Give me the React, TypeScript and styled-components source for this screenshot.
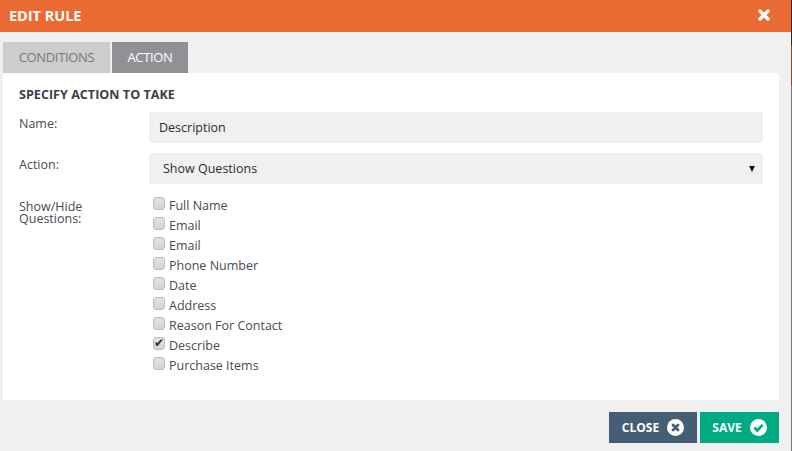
import React from "react";
import styled, { createGlobalStyle } from "styled-components";

const Global = createGlobalStyle`
  html, body { margin: 0; padding: 0; height: 100%; }
  body {
    font-family: "Open Sans", "Liberation Sans", sans-serif;
    overflow: hidden;
    background: linear-gradient(#2a2a2a 0 45px, #8c4a2c 45px 86px, #7c7c7c 86px);
  }
  * { box-sizing: border-box; }
`;

const Modal = styled.div`
  width: 791px;
  height: 451px;
  background: #f0f0f0;
  display: flex;
  flex-direction: column;
`;

const Header = styled.header`
  height: 32px;
  background: #e96b33;
  display: flex;
  align-items: center;
  justify-content: space-between;
  padding: 0 21px 2px 9px;
  color: #fff;
`;

const Title = styled.h1`
  margin: 0;
  font-size: 14.5px;
  font-weight: 700;
  letter-spacing: -0.03px;
`;

const Tabs = styled.div`
  display: flex;
  gap: 2px;
  margin: 10px 0 0 3px;
  height: 31px;
`;

const Tab = styled.div<{ $active?: boolean }>`
  height: 31px;
  width: ${(p) => (p.$active ? "76px" : "107px")};
  background: ${(p) => (p.$active ? "#919195" : "#cdcdcd")};
  color: ${(p) => (p.$active ? "#fff" : "#75777c")};
  font-size: 13px;
  letter-spacing: -0.35px;
  display: flex;
  align-items: center;
  justify-content: center;
  padding-bottom: 1px;
`;

const Panel = styled.section`
  width: 776px;
  height: 327px;
  margin-left: 3px;
  background: #fff;
  padding: 13px 16px 0 16px;
`;

const SectionTitle = styled.h2`
  margin: 0 0 9px;
  font-size: 12.6px;
  line-height: 17px;
  font-weight: 700;
  color: #3e3e46;
`;

const Row = styled.div<{ $gap: number }>`
  display: flex;
  margin-bottom: ${(p) => p.$gap}px;
`;

const Label = styled.div<{ $top: number }>`
  width: 130px;
  flex: none;
  font-size: 12.5px;
  line-height: 12px;
  color: #4a4a50;
  padding-top: ${(p) => p.$top}px;
`;

const Field = styled.div<{ $indent: number }>`
  width: 614px;
  height: 31px;
  background: #f0f0f0;
  color: #2c2c30;
  font-size: 12.5px;
  display: flex;
  align-items: center;
  justify-content: space-between;
  padding: 0 8px 0 ${(p) => p.$indent}px;
`;

const Caret = styled.span`
  width: 0;
  height: 0;
  border-left: 3.5px solid transparent;
  border-right: 3.5px solid transparent;
  border-top: 6px solid #111;
`;

const CheckList = styled.div`
  display: flex;
  flex-direction: column;
  margin-top: -2px;
  margin-left: 4px;
`;

const CheckRow = styled.label`
  height: 20px;
  display: flex;
  align-items: center;
  gap: 4px;
  font-size: 12.5px;
  color: #4a4a50;
`;

const Box = styled.input`
  appearance: none;
  width: 12px;
  height: 13px;
  margin: 0 0 3px;
  border: 1px solid #bcbcbc;
  border-radius: 3px;
  background: linear-gradient(#e2e2e2, #d6d6d6);
  display: grid;
  place-items: center;
  &:checked::after {
    content: "✔";
    font-size: 12px;
    line-height: 11px;
    color: #2e2e2e;
  }
`;

const Footer = styled.footer`
  display: flex;
  justify-content: flex-end;
  gap: 3px;
  padding: 12px 12px 0 0;
`;

const Action = styled.button<{ $bg: string; $w: number }>`
  width: ${(p) => p.$w}px;
  height: 31px;
  border: 0;
  background: ${(p) => p.$bg};
  color: #fff;
  font-family: inherit;
  font-size: 12px;
  font-weight: 700;
  display: flex;
  align-items: center;
  justify-content: center;
  gap: 8px;
  padding: 0;
`;

const items = ["Full Name", "Email", "Email", "Phone Number", "Date", "Address", "Reason For Contact", "Describe", "Purchase Items"];

export default function App() {
  return (
    <Modal>
      <Global />
      <Header>
        <Title>EDIT RULE</Title>
        <svg width="12" height="12" viewBox="0 0 12 12" aria-label="close">
          <path d="M2 2l8 8M10 2l-8 8" stroke="#fff" strokeWidth="3.4" strokeLinecap="round" />
        </svg>
      </Header>
      <Tabs>
        <Tab>CONDITIONS</Tab>
        <Tab $active>ACTION</Tab>
      </Tabs>
      <Panel>
        <SectionTitle>SPECIFY ACTION TO TAKE</SectionTitle>
        <Row $gap={10}>
          <Label $top={6}>Name:</Label>
          <Field $indent={10}>Description</Field>
        </Row>
        <Row $gap={13}>
          <Label $top={6}>Action:</Label>
          <Field $indent={14}>Show Questions<Caret /></Field>
        </Row>
        <Row $gap={0}>
          <Label $top={4}>Show/Hide<br />Questions:</Label>
          <CheckList>
            {items.map((t, i) => (
              <CheckRow key={i}>
                <Box type="checkbox" readOnly checked={t === "Describe"} />
                {t}
              </CheckRow>
            ))}
          </CheckList>
        </Row>
      </Panel>
      <Footer>
        <Action $bg="#455e74" $w={88}>
          CLOSE
          <svg width="17" height="17" viewBox="0 0 17 17">
            <circle cx="8.5" cy="8.5" r="8.5" fill="#fff" />
            <path d="M6 6l5 5M11 6l-5 5" stroke="#455e74" strokeWidth="2.8" strokeLinecap="round" />
          </svg>
        </Action>
        <Action $bg="#00ab84" $w={79}>
          SAVE
          <svg width="17" height="17" viewBox="0 0 17 17">
            <circle cx="8.5" cy="8.5" r="8.5" fill="#fff" />
            <path d="M4.4 8.6l2.9 2.9 5.3-5.6" fill="none" stroke="#00ab84" strokeWidth="2.8" />
          </svg>
        </Action>
      </Footer>
    </Modal>
  );
}
